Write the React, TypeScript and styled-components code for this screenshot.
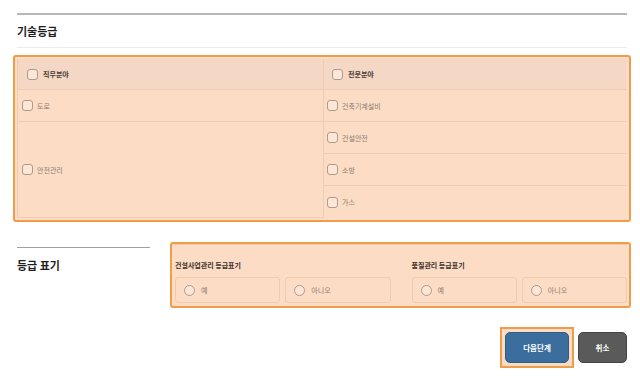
import styled, { createGlobalStyle } from 'styled-components';

const GlobalStyle = createGlobalStyle`
  body {
    margin: 0;
    background: #ffffff;
    font-family: 'Noto Sans CJK KR', 'Noto Sans', sans-serif;
  }
`;

const ORANGE = '#ef9d4a';
const PEACH = '#fcdcc5';
const LINE = '#efcbb2';

type Item = { label: string; span?: number };

const dutyItems: Item[] = [{ label: '도로' }, { label: '안전관리', span: 3 }];
const specialItems: Item[] = [
  { label: '건축기계설비' },
  { label: '건설안전' },
  { label: '소방' },
  { label: '가스' },
];

function App() {
  return (
    <>
      <GlobalStyle />
      <StPage>
        <StTopRule />
        <StSectionTitle>기술등급</StSectionTitle>
        <StHighlight>
          <StGradeTable>
            <StCell $head $left>
              <StCheckbox />
              직무분야
            </StCell>
            <StCell $head>
              <StCheckbox />
              전문분야
            </StCell>
            <StCell $left>
              <StCheckbox />
              {dutyItems[0].label}
            </StCell>
            <StCell>
              <StCheckbox />
              {specialItems[0].label}
            </StCell>
            <StCell $left $span={dutyItems[1].span}>
              <StCheckbox />
              {dutyItems[1].label}
            </StCell>
            {specialItems.slice(1).map((item) => (
              <StCell key={item.label}>
                <StCheckbox />
                {item.label}
              </StCell>
            ))}
          </StGradeTable>
        </StHighlight>

        <StMarkRow>
          <StMarkSide>
            <StSideTitle>등급 표기</StSideTitle>
          </StMarkSide>
          <StMarkBox>
            <StMarkGrid>
              {['건설사업관리 등급표기', '품질관리 등급표기'].map((title) => (
                <div key={title}>
                  <StMarkLabel>{title}</StMarkLabel>
                  <StOptions>
                    <StOption>
                      <StRadio />예
                    </StOption>
                    <StOption>
                      <StRadio />
                      아니오
                    </StOption>
                  </StOptions>
                </div>
              ))}
            </StMarkGrid>
          </StMarkBox>
        </StMarkRow>

        <StButtonRow>
          <StButtonFocus>
            <StButton $variant="primary">다음단계</StButton>
          </StButtonFocus>
          <StButton $variant="cancel">취소</StButton>
        </StButtonRow>
      </StPage>
    </>
  );
}

export default App;

const StPage = styled.main`
  display: flex;
  flex-direction: column;

  padding: 13px 13px 0 17px;
`;

const StTopRule = styled.div`
  border-top: 2px solid #b8b8b8;
`;

const StSectionTitle = styled.h2`
  display: flex;
  align-items: center;

  height: 32px;
  margin: 0;

  border-bottom: 1px solid #ececec;
  color: #1f1f1f;
  font-weight: 700;
  font-size: 11px;
`;

const StHighlight = styled.section`
  margin: 7px -4px 0;
  padding: 2px;

  border: 2px solid ${ORANGE};
  border-radius: 3px;
  background-color: ${PEACH};
`;

const StGradeTable = styled.div`
  display: grid;
  grid-template-columns: 306px 1fr;
  grid-template-rows: 31px repeat(4, 32px);

  border-left: 1px solid ${LINE};
`;

const StCell = styled.div<{ $head?: boolean; $left?: boolean; $span?: number }>`
  display: flex;
  align-items: center;
  gap: ${(p) => (p.$head ? '5px' : '4px')};

  grid-row: ${(p) => (p.$span ? `span ${p.$span}` : 'auto')};
  padding-left: ${(p) => (p.$head ? (p.$left ? '9px' : '8px') : p.$left ? '4px' : '3px')};

  border-right: ${(p) => (p.$left ? `1px solid ${LINE}` : 'none')};
  border-bottom: 1px solid ${LINE};
  background-color: ${(p) => (p.$head ? '#f4d7c5' : 'transparent')};
  color: ${(p) => (p.$head ? '#4a3d34' : '#8c7b70')};
  font-weight: ${(p) => (p.$head ? 700 : 400)};
  font-size: 7px;

  &:last-child {
    border-bottom: none;
  }
`;

const StCheckbox = styled.span`
  flex-shrink: 0;

  width: 9px;
  height: 9px;

  border: 1px solid #ab9b90;
  border-radius: 3px;
  background-color: #fde6d5;
`;

const StMarkRow = styled.section`
  display: flex;
  align-items: flex-start;

  margin-top: 20px;
`;

const StMarkSide = styled.div`
  width: 133px;
  padding-top: 5px;
  flex-shrink: 0;
`;

const StSideTitle = styled.h2`
  margin: 0;
  padding-top: 8px;

  border-top: 1px solid #a0a0a0;
  color: #1f1f1f;
  font-weight: 700;
  font-size: 11px;
  line-height: 18px;
`;

const StMarkBox = styled.div`
  flex: 1;

  margin: 0 -4px 0 20px;
  padding: 0 2px 3px 3px;

  border: 2px solid ${ORANGE};
  border-radius: 3px;
  background-color: ${PEACH};
`;

const StMarkGrid = styled.div`
  display: grid;
  grid-template-columns: 1fr 1fr;
  column-gap: 21px;

  border-top: 1px solid ${LINE};
`;

const StMarkLabel = styled.div`
  margin-bottom: 4px;
  padding-top: 12px;

  color: #3b302a;
  font-weight: 700;
  font-size: 7px;
  line-height: 16px;
`;

const StOptions = styled.div`
  display: grid;
  grid-template-columns: 1fr 1fr;
  gap: 5px;
`;

const StOption = styled.label`
  display: flex;
  align-items: center;
  gap: 6px;

  height: 26px;
  padding-left: 8px;
  box-sizing: border-box;

  border: 1px solid ${LINE};
  border-radius: 3px;
  color: #8c7b70;
  font-size: 7px;
`;

const StRadio = styled.span`
  flex-shrink: 0;

  width: 9px;
  height: 9px;

  border: 1px solid #ab9b90;
  border-radius: 50%;
  background-color: #fde6d5;
`;

const StButtonRow = styled.div`
  display: flex;
  justify-content: flex-end;
  align-items: center;
  gap: 4px;

  margin-top: 19px;
`;

const StButtonFocus = styled.div`
  display: flex;

  padding: 3px;

  border: 2px solid ${ORANGE};
  background-color: ${PEACH};
`;

const StButton = styled.button<{ $variant: 'primary' | 'cancel' }>`
  width: ${(p) => (p.$variant === 'primary' ? '64px' : '49px')};
  height: 31px;
  padding: 0;

  border: 1px solid ${(p) => (p.$variant === 'primary' ? '#2f5d86' : '#454545')};
  border-radius: 5px;
  background-color: ${(p) => (p.$variant === 'primary' ? '#3b6e9c' : '#5a5a5a')};
  color: #ffffff;
  font-family: 'Noto Sans CJK KR', 'Noto Sans', sans-serif;
  font-weight: 700;
  font-size: 7.5px;
`;
